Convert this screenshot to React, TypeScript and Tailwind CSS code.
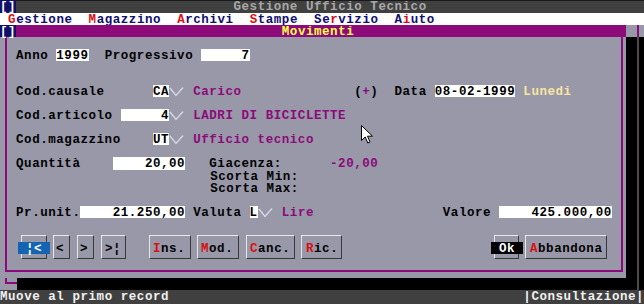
import React from 'react';

type Seg = { t?: string; cls?: string; check?: boolean };

const INPUT = 'bg-white text-black';
const PUR = 'text-[#8c0a7a]';
const RED = 'text-[#d81010]';
const ROW = 'h-[12.05px]';

// tick glyph shown after the lookup fields
const Check = () => (
  <span className="flex w-[16.1px] shrink-0">
    <svg width="16" height="12" viewBox="0 0 16 12">
      <polyline points="1,3 7,10.5 14,2.5" fill="none" stroke="#d8d8e0" strokeWidth="1.4" />
    </svg>
  </span>
);

const Line = ({ segs = [], className = '' }: { segs?: Seg[]; className?: string }) => (
  <div className={`flex whitespace-pre ${className}`}>
    {segs.map((s, i) =>
      s.check ? (
        <Check key={i} />
      ) : (
        <span key={i} className={`shrink-0 leading-[15px] ${s.cls ?? ''}`}>
          {s.t}
        </span>
      )
    )}
  </div>
);

const rows: { segs: Seg[]; pad?: string }[] = [
  { segs: [] },
  { segs: [{ t: ' Anno ' }, { t: '1999', cls: INPUT }, { t: '  Progressivo ' }, { t: '     7', cls: INPUT }] },
  { segs: [] },
  { segs: [] },
  {
    segs: [
      { t: ' Cod.causale      ' },
      { t: 'CA', cls: INPUT },
      { check: true },
      { t: ' ' },
      { t: 'Carico', cls: PUR },
      { t: '              (' },
      { t: '+', cls: PUR },
      { t: ')  Data ' },
      { t: '08-02-1999', cls: INPUT },
      { t: ' ' },
      { t: 'Lunedi', cls: 'text-[#f6e6a0]' },
    ],
  },
  { segs: [] },
  {
    segs: [
      { t: ' Cod.articolo ' },
      { t: '     4', cls: INPUT },
      { check: true },
      { t: ' ' },
      { t: 'LADRI DI BICICLETTE', cls: PUR },
    ],
  },
  { segs: [] },
  {
    segs: [
      { t: ' Cod.magazzino    ' },
      { t: 'UT', cls: INPUT },
      { check: true },
      { t: ' ' },
      { t: 'Ufficio tecnico', cls: PUR },
    ],
  },
  { segs: [] },
  {
    segs: [
      { t: ' Quantità    ' },
      { t: '    20,00', cls: INPUT },
      { t: '   Giacenza:      ' },
      { t: '-20,00', cls: PUR },
    ],
  },
  { segs: [{ t: 'Scorta Min:' }], pad: 'pl-[202.25px]' },
  { segs: [{ t: 'Scorta Max:' }], pad: 'pl-[202.25px]' },
  { segs: [] },
  {
    segs: [
      { t: ' Pr.unit.' },
      { t: '    21.250,00', cls: INPUT },
      { t: ' Valuta ' },
      { t: 'L', cls: INPUT },
      { check: true },
      { t: ' ' },
      { t: 'Lire', cls: PUR },
      { t: '                Valore ' },
      { t: '    425.000,00', cls: INPUT },
    ],
  },
  { segs: [] },
];

const buttons: { cls: string; pad: string; segs: Seg[] }[] = [
  { cls: 'ml-[13px] w-[26px]', pad: '', segs: [{ t: ' ¦< ', cls: 'ml-[-4px] bg-[#1464b4] text-white' }] },
  { cls: 'ml-[6px] w-[17px]', pad: 'pl-[2px]', segs: [{ t: '<' }] },
  { cls: 'ml-[7px] w-[17px]', pad: 'pl-[2px]', segs: [{ t: '>' }] },
  { cls: 'ml-[7px] w-[25px]', pad: 'pl-[3px]', segs: [{ t: '>¦' }] },
  { cls: 'ml-[23px] w-[42px]', pad: 'pl-[3px]', segs: [{ t: 'I', cls: RED }, { t: 'ns.' }] },
  { cls: 'ml-[6px] w-[42px]', pad: 'pl-[3px]', segs: [{ t: 'M', cls: RED }, { t: 'od.' }] },
  { cls: 'ml-[7px] w-[49px]', pad: 'pl-[3px]', segs: [{ t: 'C', cls: RED }, { t: 'anc.' }] },
  { cls: 'ml-[6px] w-[41px]', pad: 'pl-[4px]', segs: [{ t: 'R', cls: RED }, { t: 'ic.' }] },
  { cls: 'ml-[152px] w-[25px]', pad: '', segs: [{ t: ' Ok ', cls: 'ml-[-4px] bg-black text-white' }] },
  { cls: 'ml-[6px] w-[82px]', pad: 'pl-[4px]', segs: [{ t: 'A', cls: RED }, { t: 'bbandona' }] },
];

const navyBox = 'bg-[#101068] text-white';

export default function App() {
  return (
    <div className="relative h-[304px] w-[644px] overflow-hidden bg-black font-['Liberation_Mono',monospace] text-[12.5px] font-bold tracking-[0.55px] text-black">
      {/* application title */}
      <Line
        className="h-[12.5px] bg-[#404040] shadow-[inset_0_1px_0_#1a1a1a]"
        segs={[
          { t: '[]', cls: navyBox },
          { t: '                           Gestione Ufficio Tecnico', cls: 'text-[#a8a8a8]' },
        ]}
      />

      {/* menu bar */}
      <Line
        className="h-[12.5px] bg-white text-[#0e0e74]"
        segs={[
          { t: ' ' },
          { t: 'G', cls: RED },
          { t: 'estione  ' },
          { t: 'M', cls: RED },
          { t: 'agazzino  ' },
          { t: 'A', cls: RED },
          { t: 'rchivi  ' },
          { t: 'S', cls: RED },
          { t: 'tampe  Se' },
          { t: 'r', cls: RED },
          { t: 'vizio  A' },
          { t: 'i', cls: RED },
          { t: 'uto' },
        ]}
      />

      <div className="flex">
        {/* Movimenti window */}
        <div className="w-[626px] shrink-0">
          <Line
            className="h-[12px] bg-[#8c0a7a]"
            segs={[
              { t: '[]', cls: navyBox },
              { t: '                                 Movimenti', cls: 'text-[#ffff48]' },
            ]}
          />
          <div className="h-[241px] bg-[#9898a8]">
            <div className="ml-[5px] h-[235px] w-[618px] border-b-2 border-l-2 border-r-2 border-[#8c0a7a] pl-[1px]">
              {rows.map((r, i) => (
                <Line key={i} className={`${ROW} ${r.pad ?? ''}`} segs={r.segs} />
              ))}
              <div className="flex h-[36.15px] items-start">
                {buttons.map((b, i) => (
                  <div
                    key={i}
                    className={`mt-[5px] h-[24px] shrink-0 border border-t-[#e8e8e8] border-l-[#e8e8e8] border-r-[#383838] border-b-[#383838] pt-[6px] ${b.cls}`}
                  >
                    <Line className={`${ROW} ${b.pad}`} segs={b.segs} />
                  </div>
                ))}
              </div>
            </div>
          </div>
        </div>

        {/* background window edge and shadow on the right */}
        <div className="flex w-[18px] shrink-0 flex-col">
          <div className="flex h-[12px]">
            <div className="w-[11px] bg-[#9898a8]" />
            <div className="w-[2px] bg-[#8c0a7a]" />
            <div className="flex-1 bg-[#9898a8]" />
          </div>
          <div className="flex flex-1">
            <div className="w-[11px] bg-black" />
            <div className="w-[2px] bg-[#4a4a4a]" />
            <div className="flex-1 bg-black" />
          </div>
        </div>
      </div>

      {/* bottom shadow row */}
      <div className="flex h-[12px]">
        <div className="w-[17px] shrink-0 bg-[#9898a8]">
          <div className="ml-[5px] h-[6px] w-[12px] border-b-2 border-l-2 border-[#8c0a7a]" />
        </div>
        <div className="w-[620px] shrink-0 bg-black" />
        <div className="w-[2px] shrink-0 bg-[#4a4a4a]" />
        <div className="flex-1 bg-black" />
      </div>

      {/* status bar */}
      <Line
        className="h-[14px] bg-[#404040] text-[#f0f0f0]"
        segs={[
          { t: 'Muove al primo record' },
          { t: '                                            |Consultazione|' },
        ]}
      />

      {/* mouse pointer */}
      <svg className="absolute left-[361px] top-[125px]" width="12" height="19" viewBox="0 0 12 19">
        <path d="M0.5 0.5 V15.5 L4.2 12 L6.8 18 L9 17 L6.5 11.2 H11.5 Z" fill="#ffffff" stroke="#000000" strokeWidth="1" />
      </svg>
    </div>
  );
}
